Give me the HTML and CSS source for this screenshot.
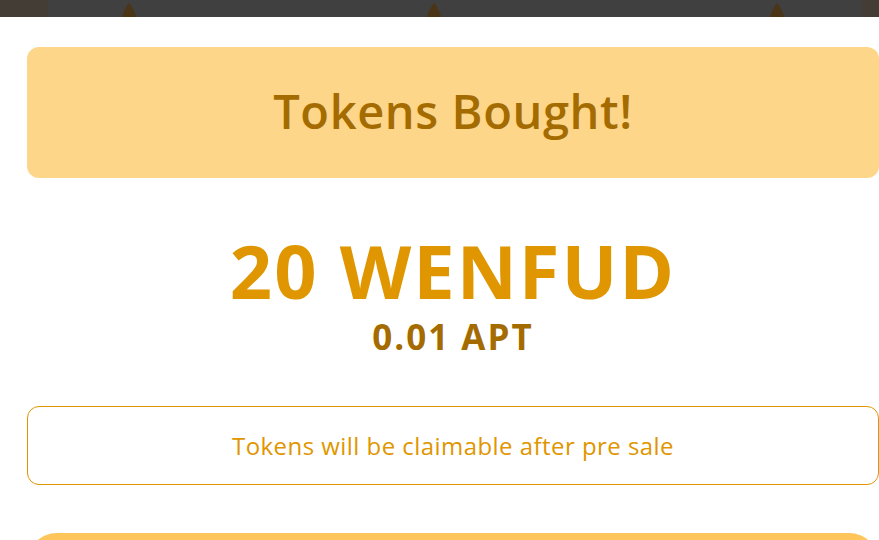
FILE: index.html
```html
<!DOCTYPE html>
<html lang="en">
<head>
  <meta charset="UTF-8">
  <meta name="viewport" content="width=device-width, initial-scale=1.0">
  <title>Tokens Bought</title>
  <link rel="stylesheet" href="styles.css">
</head>
<body>
  <div class="backdrop">
    <div class="edge"></div>
    <div class="middle">
      <svg class="pin pin-1" viewBox="0 0 14 14"><path d="M7 0C9 2 14 11 14 14H0C0 11 5 2 7 0Z"/></svg>
      <svg class="pin pin-2" viewBox="0 0 14 14"><path d="M7 0C9 2 14 11 14 14H0C0 11 5 2 7 0Z"/></svg>
      <svg class="pin pin-3" viewBox="0 0 14 14"><path d="M7 0C9 2 14 11 14 14H0C0 11 5 2 7 0Z"/></svg>
    </div>
    <div class="edge edge-right"></div>
  </div>
  <div class="modal">
    <div class="modal-head">
      <h2>Tokens Bought!</h2>
    </div>
    <div class="amount">
      <div class="tokens">20 WENFUD</div>
      <div class="price">0.01 APT</div>
    </div>
    <div class="notice">Tokens will be claimable after pre sale</div>
    <button class="close-btn">Close</button>
  </div>
</body>
</html>
```

FILE: styles.css
```css
*{margin:0;padding:0;box-sizing:border-box;font-family:'Open Sans','Noto Sans',sans-serif;}
html,body{height:100%;overflow:hidden;}
body{background:#404040;}
.backdrop{display:flex;height:17px;}
.edge{width:48px;background:#443d36;}
.edge-right{width:17px;}
.middle{flex:1;display:flex;align-items:flex-end;}
.pin{width:14px;height:14px;fill:#4a3517;display:block;}
.pin-1{margin-left:74px;}
.pin-2{margin-left:291px;}
.pin-3{margin-left:329px;}
.modal{background:#fff;height:100%;padding:30px 0 0 27px;}
.modal-head{height:131px;background:#fdd68a;border-radius:12px;display:flex;justify-content:center;align-items:center;}
.modal-head h2{color:#a46c00;font-size:47px;font-weight:600;line-height:1;letter-spacing:0.6px;padding-bottom:2px;}
.amount{text-align:center;padding-top:56px;height:228px;}
.tokens{color:#df9600;font-size:74px;font-weight:700;line-height:1;letter-spacing:2px;}
.price{color:#a46c00;font-size:35px;font-weight:700;line-height:1;letter-spacing:2px;margin-top:11px;}
.notice{height:79px;border:1px solid #df9600;border-radius:12px;display:flex;justify-content:center;align-items:center;color:#df9600;font-size:24px;letter-spacing:0.45px;}
.close-btn{display:block;width:100%;height:84px;padding-top:44px;margin-top:48px;border:none;border-radius:30px 30px 0 0;background:#fec65a;color:#fff;font-size:22px;line-height:1;}
```
